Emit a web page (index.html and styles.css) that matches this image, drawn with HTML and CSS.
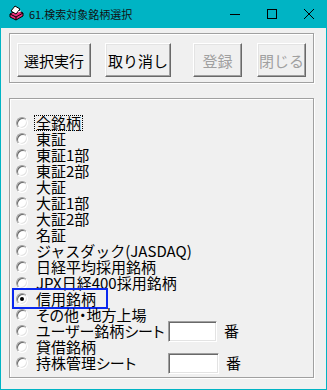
FILE: index.html
```html
<!DOCTYPE html>
<html lang="ja">
<head>
  <meta charset="UTF-8">
  <title>61.検索対象銘柄選択</title>
  <link rel="stylesheet" href="styles.css">
</head>
<body>
  <div class="window">
    <div class="titlebar">
      <svg class="app-icon" width="17" height="16" viewBox="0 0 17 16">
        <path d="M2 9 L9 5 L15 8 L15 11 L8 15 L2 12 Z" fill="#e8307a" stroke="#000" stroke-width="1"/>
        <path d="M2 9 L8 12 L15 8" fill="none" stroke="#000" stroke-width="1"/>
        <path d="M8 12 L8 15" stroke="#000" stroke-width="1"/>
        <path d="M3 6 L7 1 L12 4 L8 9 Z" fill="#fff" stroke="#000" stroke-width="1"/>
        <path d="M10 7 L13 6" stroke="#fff" stroke-width="1"/>
      </svg>
      <span class="title">61.検索対象銘柄選択</span>
      <div class="controls">
        <svg width="10" height="10" viewBox="0 0 10 10"><path d="M0 5.5 H10" stroke="#000" stroke-width="1"/></svg>
        <svg width="10" height="10" viewBox="0 0 10 10"><rect x="0.5" y="0.5" width="9" height="9" fill="none" stroke="#000" stroke-width="1"/></svg>
        <svg width="10" height="10" viewBox="0 0 10 10"><path d="M0 0 L10 10 M10 0 L0 10" stroke="#000" stroke-width="1"/></svg>
      </div>
    </div>

    <div class="group buttons">
      <button class="btn btn-run">選択実行</button>
      <button class="btn btn-cancel">取り消し</button>
      <button class="btn btn-reg" disabled>登録</button>
      <button class="btn btn-close" disabled>閉じる</button>
    </div>

    <div class="group options">
      <div class="row"><span class="radio"></span><span class="label focus">全銘柄</span></div>
      <div class="row"><span class="radio"></span><span class="label">東証</span></div>
      <div class="row"><span class="radio"></span><span class="label">東証1部</span></div>
      <div class="row"><span class="radio"></span><span class="label">東証2部</span></div>
      <div class="row"><span class="radio"></span><span class="label">大証</span></div>
      <div class="row"><span class="radio"></span><span class="label">大証1部</span></div>
      <div class="row"><span class="radio"></span><span class="label">大証2部</span></div>
      <div class="row"><span class="radio"></span><span class="label">名証</span></div>
      <div class="row"><span class="radio"></span><span class="label">ジャスダック(JASDAQ)</span></div>
      <div class="row"><span class="radio"></span><span class="label">日経平均採用銘柄</span></div>
      <div class="row"><span class="radio"></span><span class="label">JPX日経400採用銘柄</span></div>
      <div class="row marked"><span class="radio checked"></span><span class="label">信用銘柄</span></div>
      <div class="row"><span class="radio"></span><span class="label narrow">その他・地方上場</span></div>
      <div class="row"><span class="radio"></span><span class="label narrow fixed">ユーザー銘柄シート</span><span class="textbox"></span><span class="unit">番</span></div>
      <div class="row"><span class="radio"></span><span class="label">貸借銘柄</span></div>
      <div class="row"><span class="radio"></span><span class="label narrow fixed">持株管理シート</span><span class="textbox wide"></span><span class="unit">番</span></div>
    </div>
  </div>
</body>
</html>
```

FILE: styles.css
```css
:root {
  --accent: #00b4c4;
  --face: #f0f0f0;
  --shadow: #a0a0a0;
  --dark-shadow: #696969;
  --light: #e3e3e3;
  --font-ui: "Noto Sans CJK JP", "Noto Sans", sans-serif;
}

body {
  margin: 0;
  font-family: var(--font-ui);
  color: #000;
}

.window {
  width: 327px;
  height: 390px;
  box-sizing: border-box;
  background: var(--face);
  border: 1px solid var(--accent);
  border-top: none;
}

/* barre de titre */
.titlebar {
  height: 28px;
  background: var(--accent);
  display: flex;
  align-items: center;
  padding-left: 7px;
}

.app-icon {
  margin-top: -2px;
}

.title {
  margin-left: 4px;
  font-size: 11px;
  color: #111;
  line-height: 1;
}

.controls {
  margin-left: auto;
  display: flex;
  align-items: center;
  gap: 27px;
  padding-right: 12px;
  margin-top: -1px;
}

/* cadres */
.group {
  box-sizing: border-box;
  width: 305px;
  margin-left: 8px;
  border: 1px solid var(--shadow);
  box-shadow: inset 1px 1px 0 #fff, 1px 1px 0 #fff;
}

.buttons {
  margin-top: 5px;
  height: 50px;
  display: flex;
  align-items: flex-start;
  padding: 9px 0 0 7px;
}

.btn {
  height: 34px;
  box-sizing: border-box;
  padding: 0;
  font-family: var(--font-ui);
  font-size: 15px;
  color: #000;
  background: var(--face);
  border: 1px solid;
  border-color: #fff var(--dark-shadow) var(--dark-shadow) #fff;
  box-shadow: inset -1px -1px 0 var(--shadow), inset 1px 1px 0 var(--light);
  border-radius: 0;
}

.btn:disabled {
  color: #a0a0a0;
}

.btn-run { width: 74px; }
.btn-cancel { width: 66px; margin-left: 14px; }
.btn-reg { width: 49px; margin-left: 22px; }
.btn-close { width: 49px; margin-left: 15px; }

.options {
  margin-top: 15px;
  height: 280px;
  padding-top: 16px;
}

.row {
  position: relative;
  height: 16px;
  display: flex;
  align-items: center;
  font-size: 15px;
  line-height: 16px;
}

.radio {
  position: relative;
  flex: none;
  width: 12px;
  height: 12px;
  box-sizing: border-box;
  margin-left: 6px;
  border-radius: 50%;
  background: #fff;
  border: 1px solid;
  border-color: var(--shadow) #fff #fff var(--shadow);
  box-shadow: inset 1px 1px 0 var(--dark-shadow), inset -1px -1px 0 var(--light);
}

.radio.checked::after {
  content: "";
  position: absolute;
  left: 3px;
  top: 3px;
  width: 4px;
  height: 4px;
  border-radius: 50%;
  background: #000;
}

.label {
  margin-left: 6px;
  padding: 0 1px;
  height: 16px;
  border: 1px solid transparent;
  box-sizing: border-box;
  white-space: nowrap;
  display: flex;
  align-items: center;
}

.label.narrow {
  font-feature-settings: "palt";
}

.label.focus {
  border: 1px dotted #000;
}

.label.fixed {
  width: 134px;
}

/* cadre bleu autour de "信用銘柄" */
.marked::before {
  content: "";
  position: absolute;
  left: 2px;
  top: -3px;
  width: 96px;
  height: 21px;
  box-sizing: border-box;
  border: 2px solid #0a28f0;
}

.textbox {
  flex: none;
  width: 49px;
  height: 21px;
  box-sizing: border-box;
  background: #fff;
  border: 1px solid;
  border-color: var(--shadow) #fff #fff var(--shadow);
  box-shadow: inset 1px 1px 0 var(--dark-shadow), inset -1px -1px 0 var(--light);
}

.textbox.wide {
  width: 51px;
}

.unit {
  margin-left: 7px;
}
```
